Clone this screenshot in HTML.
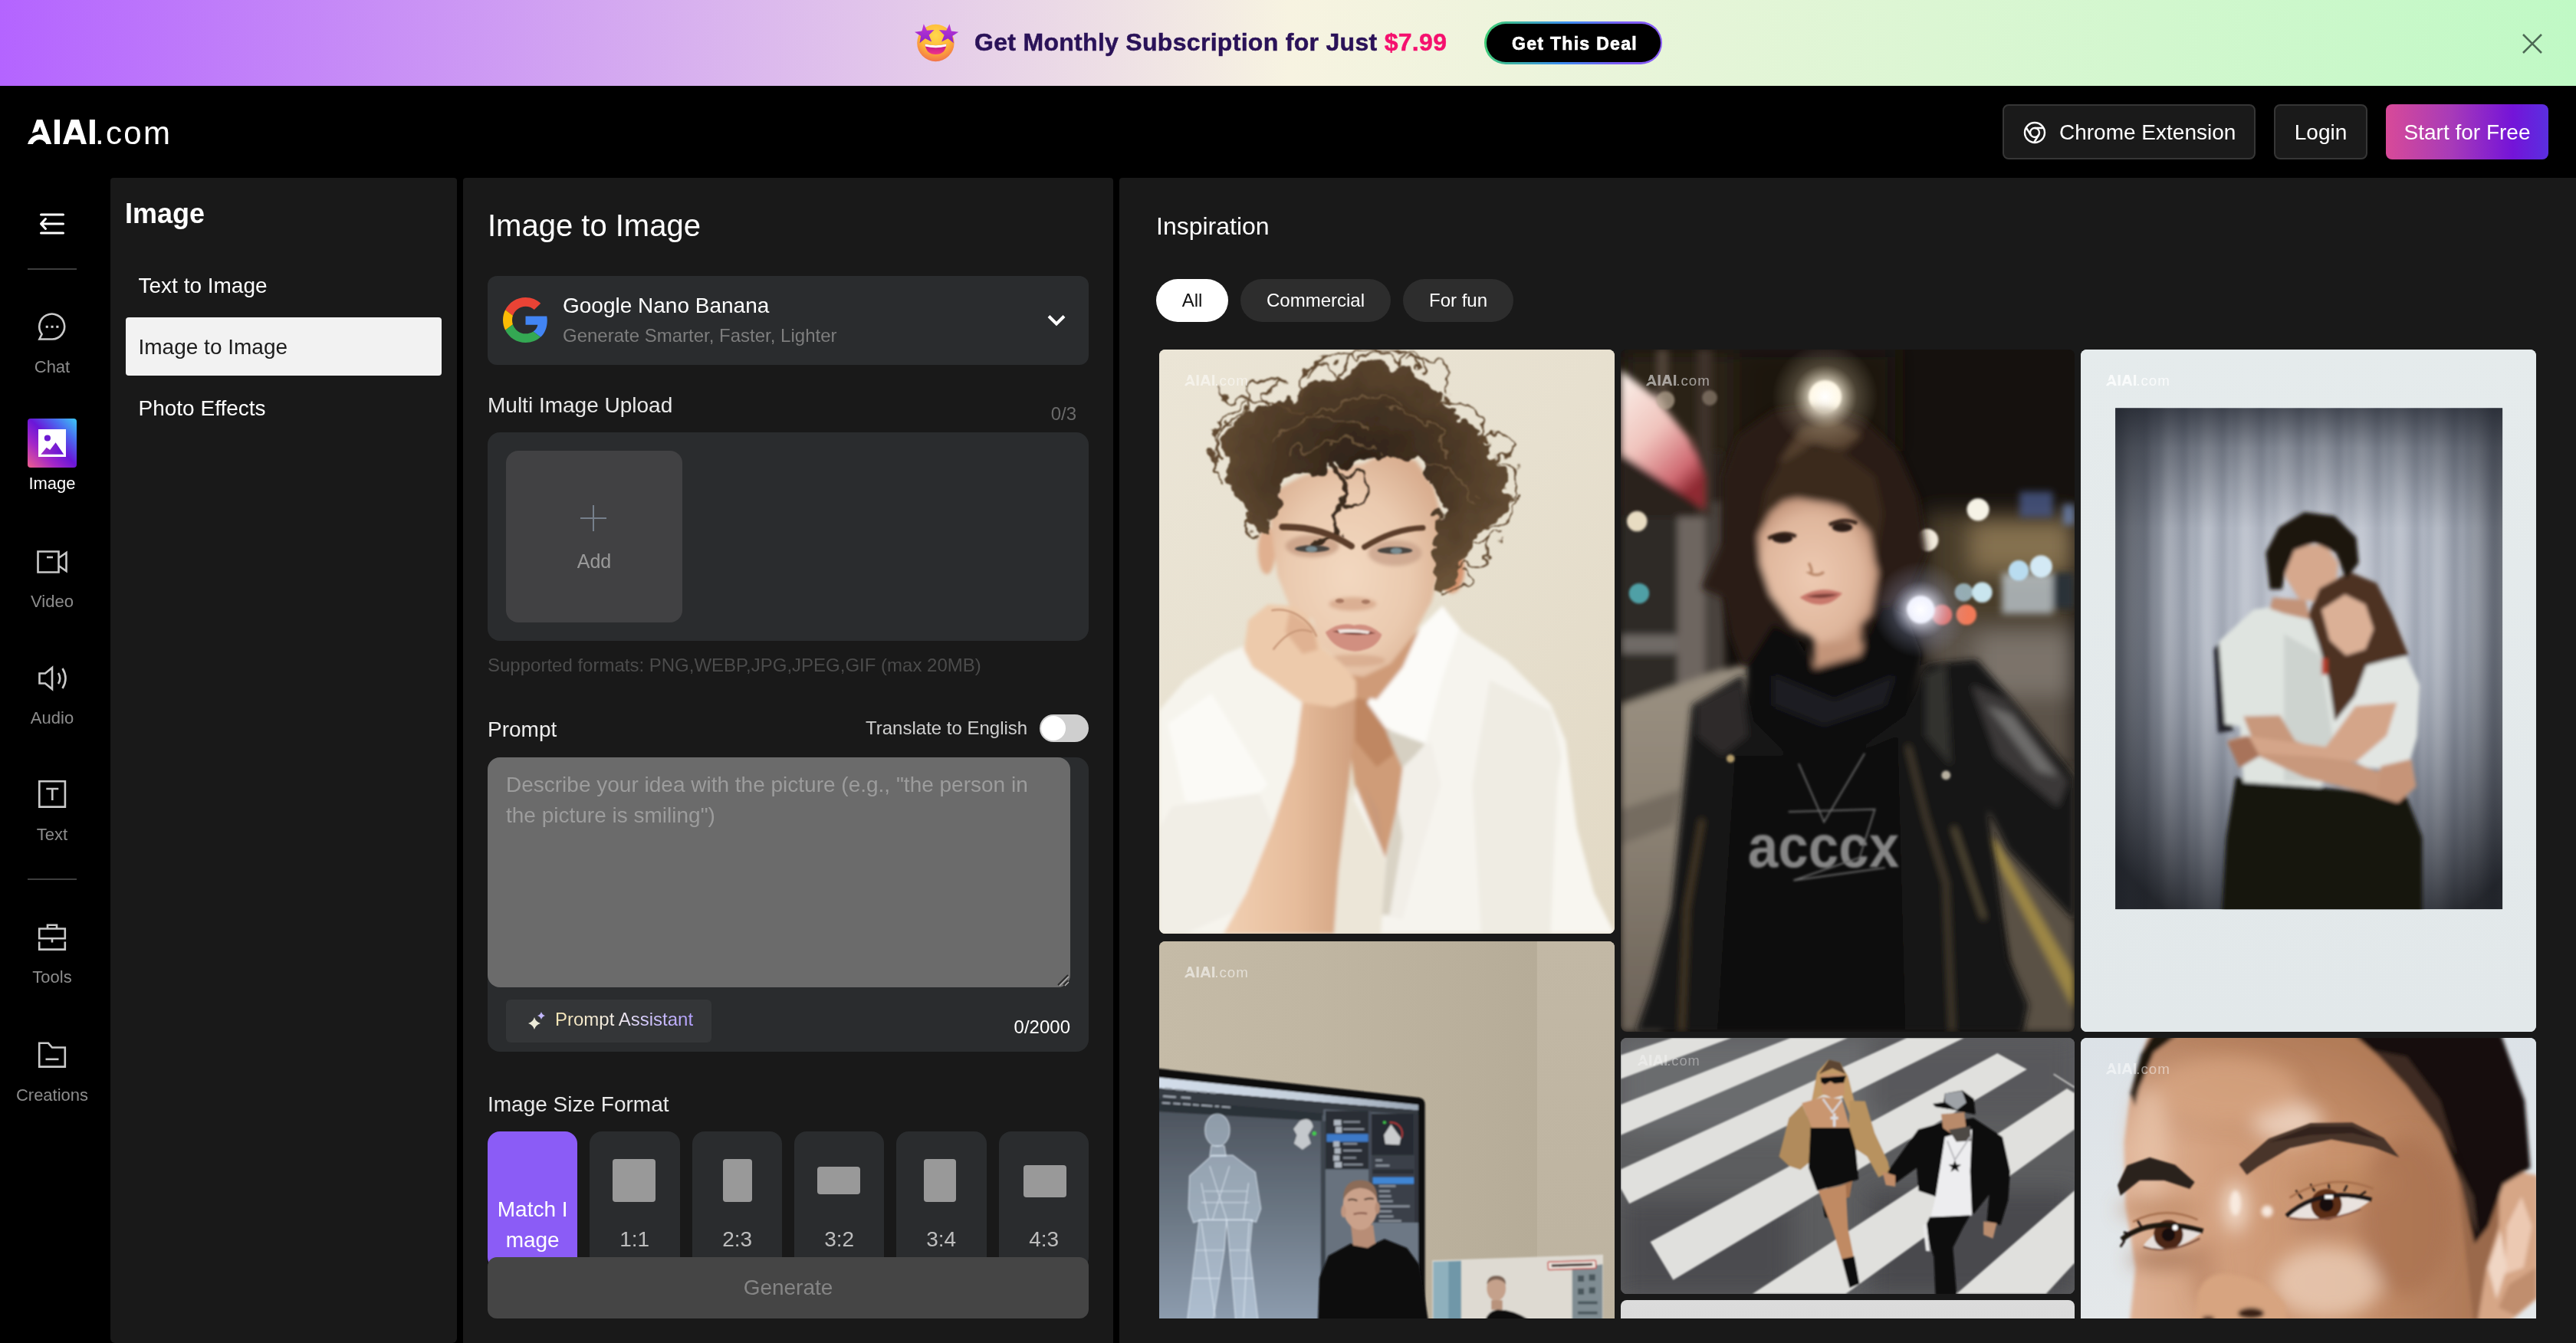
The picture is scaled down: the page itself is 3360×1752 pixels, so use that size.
<!DOCTYPE html>
<html lang="en">
<head>
<meta charset="utf-8">
<title>AIAI.com - Image to Image</title>
<style>
*{box-sizing:border-box;margin:0;padding:0}
html,body{width:3360px;height:1752px;overflow:hidden;background:#000}
body{position:relative;font-family:"Liberation Sans",sans-serif;color:#fff;-webkit-font-smoothing:antialiased}
.abs{position:absolute}
.t,.sl,.mi,.fl,.pill{will-change:transform}
.t{position:absolute;white-space:nowrap;line-height:1}
/* banner */
#banner{left:0;top:0;width:3360px;height:112px;background:linear-gradient(90deg,#b464ff 0%,#f7f3e1 50%,#c0f9c5 100%)}
#deal{left:1936px;top:28px;width:232px;height:56px;border-radius:28px;background:linear-gradient(100deg,#3ecf6e 0%,#3c8df0 45%,#7b5cf5 75%,#8a5cf6 100%);}
#deal i{position:absolute;left:3px;top:3px;right:2px;bottom:3px;border-radius:26px;background:#000}
/* header */
.hbtn{position:absolute;top:136px;height:72px;border:2px solid #363636;border-radius:8px;background:#1a1a1a}
/* sidebar */
.sl{position:absolute;left:0;width:136px;text-align:center;font-size:22px;line-height:24px;color:#8c8c8c}
.sdiv{position:absolute;left:36px;width:64px;height:2px;background:#3d3d3d}
svg{position:absolute;overflow:visible}
.ic{fill:none;stroke:#c9c9c9;stroke-width:2.6}
/* panels */
.panel{position:absolute;top:232px;background:#191919}
.mi{position:absolute;left:164px;width:412px;height:76px;line-height:78px;padding-left:16.5px;font-size:28px;color:#fff;border-radius:4px}
.box{position:absolute;background:#2a2c2e}
.fmt{position:absolute;top:1476px;width:117.33px;height:180px;border-radius:16px;background:#2a2c2e}
.fmt b{position:absolute;background:#999;border-radius:4px}
.fl{position:absolute;top:1601px;width:117.33px;text-align:center;font-size:28px;line-height:32px;color:#bdbdbd}
.pill{position:absolute;top:364px;height:56px;border-radius:28px;background:#2d2d2d;font-size:24px;line-height:56px;text-align:center;color:#fff}
.img{position:absolute;overflow:hidden;border-radius:8px}
.wm{position:absolute;left:33px;top:33px;width:82px;height:14.3px;fill:#fff;color:#fff;opacity:.55}
</style>
</head>
<body>
<svg width="0" height="0" style="left:0;top:0"><defs><clipPath id="lc2"><rect x="0" y="0" width="26" height="32"/></clipPath><symbol id="lg" viewBox="0 0 184 32"><circle cx="15.65" cy="35.6" r="12.75" stroke="currentColor" stroke-width="6.5" fill="none" clip-path="url(#lc2)"/><path d="M12 0H19.4L31.3 32H24.5L16.1 8.9L13.3 15.4L5.9 17.7Z"/><rect x="35" y="0" width="7" height="32"/><path fill-rule="evenodd" d="M56.7 0H67L77 32H70.2L68.3 26H54.8L52.9 32H46ZM61.5 9.8L66 20.2H56.9Z"/><rect x="80.9" y="0" width="7" height="32"/><text x="88" y="32" font-size="42" letter-spacing="2.3" font-family="Liberation Sans, sans-serif">.com</text></symbol></defs></svg>

<!-- ================= BANNER ================= -->
<div id="banner" class="abs"></div>
<svg id="emoji" style="left:1192px;top:28px" width="58" height="56" viewBox="0 0 58 56">
  <defs>
    <radialGradient id="eg" cx="0.5" cy="0.3" r="0.75"><stop offset="0" stop-color="#ffd74d"/><stop offset=".55" stop-color="#ffb636"/><stop offset="1" stop-color="#f0684e"/></radialGradient>
    <linearGradient id="es" x1="0" y1="0" x2="0" y2="1"><stop offset="0" stop-color="#c238d8"/><stop offset="1" stop-color="#8a22c8"/></linearGradient>
    <linearGradient id="em" x1="0" y1="0" x2="0" y2="1"><stop offset="0" stop-color="#b5148c"/><stop offset="1" stop-color="#f0358a"/></linearGradient>
  </defs>
  <circle cx="28.4" cy="28" r="24.2" fill="url(#eg)"/>
  <path d="M14.5 29.5Q28.5 33 42.5 29.5Q41 43 28.5 43Q16 43 14.5 29.5Z" fill="url(#em)"/>
  <path d="M14.5 29.5Q28.5 33 42.5 29.5L42 32.6Q28.5 36 15 32.6Z" fill="#fff"/>
  <path d="M12.8 3.2L17.0 11.8L26.5 11.1L19.7 17.8L23.2 26.6L14.8 22.2L7.5 28.3L9.1 18.9L1.0 13.8L10.5 12.4Z" fill="url(#es)"/>
  <path d="M46.5 3.2L48.8 12.4L58.3 13.8L50.2 18.9L51.9 28.3L44.5 22.2L36.1 26.6L39.6 17.8L32.8 11.1L42.3 11.8Z" fill="url(#es)"/>
</svg>
<div class="t" id="btxt" style="left:1271px;top:35px;font-size:32px;line-height:40px;font-weight:700;color:#2a1258;letter-spacing:.3px;-webkit-text-stroke:.5px #2a1258">Get Monthly Subscription for Just <span style="color:#f5106e;-webkit-text-stroke:.5px #f5106e">$7.99</span></div>
<div id="deal" class="abs"><i></i></div>
<div class="t" id="dealt" style="left:1937.5px;top:28.5px;width:232px;height:56px;line-height:56px;text-align:center;font-size:23px;font-weight:700;color:#fff;letter-spacing:1.3px;-webkit-text-stroke:.7px #fff">Get This Deal</div>
<svg style="left:3290px;top:44px" width="26" height="26" viewBox="0 0 26 26"><path d="M1 1L25 25M25 1L1 25" stroke="#4d6a55" stroke-width="2.6" fill="none"/></svg>

<!-- ================= HEADER ================= -->
<svg id="logo" style="left:36px;top:156px" width="92" height="32" viewBox="0 0 92 32"><defs><clipPath id="lc"><rect x="0" y="0" width="26" height="32"/></clipPath></defs><g fill="#fff"><circle cx="15.65" cy="35.6" r="12.75" stroke="#fff" stroke-width="6.5" fill="none" clip-path="url(#lc)"/><path d="M12 0H19.4L31.3 32H24.5L16.1 8.9L13.3 15.4L5.9 17.7Z"/><rect x="35" y="0" width="7" height="32"/><path fill-rule="evenodd" d="M56.7 0H67L77 32H70.2L68.3 26H54.8L52.9 32H46ZM61.5 9.8L66 20.2H56.9Z"/><rect x="80.9" y="0" width="7" height="32"/></g></svg>
<div class="t" id="logoc" style="left:124px;top:150px;font-size:42px;line-height:48px;letter-spacing:2.3px">.com</div>

<div class="hbtn" style="left:2612px;width:330px"></div>
<svg style="left:2639px;top:158px" width="30" height="30" viewBox="0 0 30 30"><g fill="none" stroke="#fff" stroke-width="2.4"><circle cx="15" cy="15" r="13"/><circle cx="15" cy="15" r="6"/><path d="M15 9H27M9.8 18L3.6 8.2M20.2 18L14 28"/></g></svg>
<div class="t" id="chx" style="left:2686px;top:157px;font-size:28px;line-height:32px">Chrome Extension</div>
<div class="hbtn" style="left:2966px;width:122px"></div>
<div class="t" id="login" style="left:2966px;top:157px;width:122px;text-align:center;font-size:28px;line-height:32px">Login</div>
<div class="abs" style="left:3112px;top:136px;width:212px;height:72px;border-radius:8px;background:linear-gradient(90deg,#d84a98 0%,#a83bb8 40%,#7414d8 78%,#5a2fe0 100%)"></div>
<div class="t" id="sff" style="left:3112px;top:157px;width:212px;text-align:center;font-size:28px;line-height:32px">Start for Free</div>

<!-- ================= SIDEBAR ================= -->
<svg style="left:52px;top:278px" width="33" height="28" viewBox="0 0 33 28"><g fill="none" stroke="#fff" stroke-width="3" stroke-linecap="round" stroke-linejoin="round"><path d="M1.5 2H30.5M1.5 26H30.5M2 14H30.5M7.5 7.5L1.5 14L7.5 20.5"/></g></svg>
<div class="sdiv" style="top:350px"></div>

<svg style="left:49px;top:408px" width="38" height="38" viewBox="0 0 38 38"><path class="ic" stroke-width="2.8" stroke-linejoin="miter" d="M2.4 34.5H19.1A16.45 16.45 0 1 0 5.6 28Z"/><g fill="#d0d0d0"><rect x="10.7" y="16.8" width="3.1" height="3"/><rect x="17.5" y="16.8" width="3.1" height="3"/><rect x="24.3" y="16.8" width="3.1" height="3"/></g></svg>
<div class="sl" id="sl0" style="top:467px">Chat</div>

<div class="abs" style="left:36px;top:546px;width:64px;height:64px;border-radius:4px;background:linear-gradient(45deg,#ef5f8c 0%,#a327c8 30%,#6a17d8 52%,#4a6cf0 76%,#3ccaf5 100%)"></div>
<svg style="left:50px;top:560px" width="36" height="36" viewBox="0 0 36 36"><defs><linearGradient id="mg" x1="0" y1="0" x2="1" y2="0"><stop offset="0" stop-color="#9c2cc6"/><stop offset="1" stop-color="#6414d8"/></linearGradient></defs><rect width="36" height="36" fill="#fff"/><circle cx="11.9" cy="11.5" r="4.1" fill="#6d1ad2"/><path d="M3.3 32.8L10.7 23.8L15.2 27.1L22.6 17.3L33.2 32.8Z" fill="url(#mg)"/></svg>
<div class="sl" id="sl1" style="top:619px;color:#fff">Image</div>

<svg style="left:48px;top:717.5px" width="40" height="30" viewBox="0 0 40 30"><path class="ic" d="M1.5 1.5H28.5V28.5H1.5ZM28.5 10L38.5 3V27L28.5 20"/><path d="M13 9H21" stroke="#c9c9c9" stroke-width="2.6"/></svg>
<div class="sl" id="sl2" style="top:773px">Video</div>

<svg style="left:49.5px;top:869px" width="38" height="32" viewBox="0 0 38 32"><path class="ic" d="M1.5 9.5H9L18 2V30L9 22.5H1.5Z"/><path class="ic" d="M26 9Q30.5 16 26 23M31.5 3Q39.5 16 31.5 29"/></svg>
<div class="sl" id="sl3" style="top:925px">Audio</div>

<svg style="left:49px;top:1017px" width="38" height="38" viewBox="0 0 38 38"><path class="ic" d="M2.3 2.3H35.9V35.6H2.3Z"/><path class="ic" d="M11.3 12H27.3M19.3 12V27"/></svg>
<div class="sl" id="sl4" style="top:1077px">Text</div>

<div class="sdiv" style="top:1146px"></div>

<svg style="left:49px;top:1204.6px" width="38" height="36" viewBox="0 0 38 36"><path class="ic" d="M2.2 6.5H35.8V19.2H2.2ZM13 6.5V1.8H25V6.5M2.2 23.5V33.6H35.8V23.5M19 19.2V24.5"/></svg>
<div class="sl" id="sl5" style="top:1263px">Tools</div>

<svg style="left:49px;top:1359px" width="38" height="35" viewBox="0 0 38 35"><path class="ic" d="M2.2 1.8H14L19 7.5H35.8V32.6H2.2Z"/><path class="ic" d="M10.5 22.8H27.5"/></svg>
<div class="sl" id="sl6" style="top:1416.5px">Creations</div>

<!-- ================= PANEL 1 : menu ================= -->
<div class="panel" style="left:144px;width:452px;height:1520px;border-radius:4px 4px 6px 6px"></div>
<div class="t" id="p1t" style="left:163px;top:260.5px;font-size:36px;line-height:36px;font-weight:700">Image</div>
<div class="mi" id="mi1" style="top:334px">Text to Image</div>
<div class="mi" id="mi2" style="top:414px;background:#f2f2f2;color:#1c1c1c">Image to Image</div>
<div class="mi" id="mi3" style="top:494px">Photo Effects</div>

<!-- ================= PANEL 2 : form ================= -->
<div class="panel" style="left:604px;width:848px;height:1520px;border-radius:4px 4px 0 0"></div>
<div class="t" id="p2t" style="left:636px;top:272px;font-size:40px;line-height:44px">Image to Image</div>

<div class="box" style="left:636px;top:360px;width:784px;height:116px;border-radius:12px"></div>
<svg style="left:656px;top:388px" width="59" height="59" viewBox="0 0 48 48"><path fill="#EA4335" d="M24 9.5c3.54 0 6.71 1.22 9.21 3.6l6.85-6.85C35.9 2.38 30.47 0 24 0 14.62 0 6.51 5.38 2.56 13.22l7.98 6.19C12.43 13.72 17.74 9.5 24 9.5z"/><path fill="#4285F4" d="M46.98 24.55c0-1.57-.15-3.09-.38-4.55H24v9.02h12.94c-.58 2.96-2.26 5.48-4.78 7.18l7.73 6c4.51-4.18 7.09-10.36 7.09-17.65z"/><path fill="#FBBC05" d="M10.53 28.59c-.48-1.45-.76-2.99-.76-4.59s.27-3.14.76-4.59l-7.98-6.19C.92 16.46 0 20.12 0 24c0 3.88.92 7.54 2.56 10.78l7.97-6.19z"/><path fill="#34A853" d="M24 48c6.48 0 11.93-2.13 15.89-5.81l-7.73-6c-2.15 1.45-4.92 2.3-8.16 2.3-6.26 0-11.57-4.22-13.47-9.91l-7.98 6.19C6.51 42.62 14.62 48 24 48z"/></svg>
<div class="t" id="gnb" style="left:734px;top:383px;font-size:28px;line-height:32px">Google Nano Banana</div>
<div class="t" id="gsub" style="left:734px;top:424px;font-size:24px;line-height:28px;color:#7d7d7d">Generate Smarter, Faster, Lighter</div>
<svg style="left:1366px;top:410px" width="24" height="16" viewBox="0 0 24 16"><path d="M2 2.5L12 12.5L22 2.5" fill="none" stroke="#fff" stroke-width="4"/></svg>

<div class="t" id="miu" style="left:636px;top:513px;font-size:28px;line-height:32px;color:#e8e8e8">Multi Image Upload</div>
<div class="t" id="c03" style="left:1344px;top:526px;width:60px;text-align:right;font-size:24px;line-height:28px;color:#6a6a6a">0/3</div>
<div class="box" style="left:636px;top:564px;width:784px;height:272px;border-radius:16px"></div>
<div class="abs" style="left:660px;top:588px;width:230px;height:224px;border-radius:16px;background:#414143"></div>
<svg style="left:757px;top:659px" width="34" height="34" viewBox="0 0 34 34"><path d="M17 0V34M0 17H34" stroke="#76808c" stroke-width="2" fill="none"/></svg>
<div class="t" id="add" style="left:660px;top:718px;width:230px;text-align:center;font-size:25px;line-height:28px;color:#9a9a9a">Add</div>
<div class="t" id="sup" style="left:636px;top:854px;font-size:24px;line-height:28px;color:#4b4b4b">Supported formats: PNG,WEBP,JPG,JPEG,GIF (max 20MB)</div>

<div class="t" id="prm" style="left:636px;top:936px;font-size:28px;line-height:32px;color:#ececec">Prompt</div>
<div class="t" id="tte" style="left:1129px;top:936px;font-size:24px;line-height:28px;color:#cfcfcf">Translate to English</div>
<div class="abs" style="left:1356px;top:932px;width:64px;height:36px;border-radius:18px;background:#cfcfcf"></div>
<div class="abs" style="left:1358px;top:934px;width:32px;height:32px;border-radius:16px;background:#fff"></div>

<div class="box" style="left:636px;top:988px;width:784px;height:384px;border-radius:16px"></div>
<div class="abs" style="left:636px;top:988px;width:760px;height:300px;border-radius:16px;background:#6b6b6b"></div>
<div class="t" id="ph" style="left:660px;top:1004px;font-size:28px;line-height:40px;color:#9c9c9c;white-space:normal;width:720px">Describe your idea with the picture (e.g., "the person in<br>the picture is smiling")</div>
<svg style="left:1378px;top:1270px" width="16" height="16" viewBox="0 0 16 16"><path d="M15 2L2 15M15 9L9 15" stroke="#2b2b2b" stroke-width="2" fill="none"/><path d="M16 4L4 16M16 11L11 16" stroke="#b5b5b5" stroke-width="1.2" fill="none"/></svg>
<div class="abs" style="left:660px;top:1304px;width:268px;height:56px;border-radius:6px;background:#343638"></div>
<svg style="left:689px;top:1320px" width="22" height="24" viewBox="0 0 22 24"><path d="M8 7Q9.8 13.2 16 15Q9.8 16.8 8 23Q6.2 16.8 0 15Q6.2 13.2 8 7Z" fill="#ecead8"/><path d="M17 0Q18.2 3.8 22 5Q18.2 6.2 17 10Q15.8 6.2 12 5Q15.8 3.8 17 0Z" fill="#c3b8ff"/></svg>
<div class="t" id="pa" style="left:724px;top:1316px;font-size:24px;line-height:28px;background:linear-gradient(90deg,#f7e6b4 0%,#f6f0e6 42%,#d6ccff 65%,#b3a0ff 100%);-webkit-background-clip:text;background-clip:text;color:transparent">Prompt Assistant</div>
<div class="t" id="cnt" style="left:1296px;top:1326px;width:100px;text-align:right;font-size:24px;line-height:28px;color:#fff">0/2000</div>

<div class="t" id="isf" style="left:636px;top:1425px;font-size:28px;line-height:32px;color:#e8e8e8">Image Size Format</div>
<div class="fmt" style="left:636px;background:#8b5cf6"></div>
<div class="fmt" style="left:769.33px"><b style="left:30px;top:36px;width:56px;height:56px"></b></div>
<div class="fmt" style="left:902.67px"><b style="left:40px;top:36px;width:38px;height:56px"></b></div>
<div class="fmt" style="left:1036px"><b style="left:30px;top:46px;width:56px;height:36px"></b></div>
<div class="fmt" style="left:1169.33px"><b style="left:36px;top:36px;width:42px;height:56px"></b></div>
<div class="fmt" style="left:1302.67px"><b style="left:32px;top:44px;width:56px;height:42px"></b></div>
<div class="fl" id="fl0" style="left:636px;top:1557.5px;color:#fff;line-height:40px">Match I<br>mage</div>
<div class="fl" id="fl1" style="left:769.33px">1:1</div>
<div class="fl" id="fl2" style="left:902.67px">2:3</div>
<div class="fl" id="fl3" style="left:1036px">3:2</div>
<div class="fl" id="fl4" style="left:1169.33px">3:4</div>
<div class="fl" id="fl5" style="left:1302.67px">4:3</div>
<div class="abs" style="left:636px;top:1640px;width:784px;height:80px;border-radius:12px;background:#454545"></div>
<div class="t" id="gen" style="left:636px;top:1664px;width:784px;text-align:center;font-size:28px;line-height:32px;color:#858585">Generate</div>

<!-- ================= PANEL 3 : inspiration ================= -->
<div class="panel" style="left:1460px;width:1900px;height:1520px;border-radius:4px 0 0 0"></div>
<div class="t" id="insp" style="left:1508px;top:277px;font-size:32px;line-height:36px">Inspiration</div>
<div class="pill" id="pl0" style="left:1508px;width:94px;background:#fff;color:#111">All</div>
<div class="pill" id="pl1" style="left:1618px;width:196px">Commercial</div>
<div class="pill" id="pl2" style="left:1830px;width:144px">For fun</div>

<div id="grid" class="abs" style="left:1500px;top:440px;width:1860px;height:1280px;overflow:hidden">
<!--IMG1S--><div class="img" style="left:12px;top:16px;width:594px;height:762px;background:#e8e1d0">
<svg width="594" height="762" viewBox="0 0 1047 1343" preserveAspectRatio="none" style="left:0;top:0">
<defs>
<filter id="b1" x="-10%" y="-10%" width="120%" height="120%"><feGaussianBlur stdDeviation="5"/></filter>
<filter id="b1s" x="-10%" y="-10%" width="120%" height="120%"><feGaussianBlur stdDeviation="2"/></filter>
<filter id="h1" x="-20%" y="-20%" width="140%" height="140%"><feTurbulence type="fractalNoise" baseFrequency="0.018" numOctaves="3" seed="7" result="n"/><feDisplacementMap in="SourceGraphic" in2="n" scale="70" xChannelSelector="R" yChannelSelector="G"/><feGaussianBlur stdDeviation="1.6"/></filter>
<filter id="b1l" x="-20%" y="-20%" width="140%" height="140%"><feGaussianBlur stdDeviation="18"/></filter>
<linearGradient id="g1bg" x1="0" y1="0" x2="1" y2="1"><stop offset="0" stop-color="#ebe5d6"/><stop offset=".5" stop-color="#e7e0cf"/><stop offset="1" stop-color="#e2d9c5"/></linearGradient>
<linearGradient id="g1arm" x1="0" y1="0" x2="1" y2="0"><stop offset="0" stop-color="#f1d0b3"/><stop offset=".55" stop-color="#e6bc9b"/><stop offset="1" stop-color="#cf9f7e"/></linearGradient>
<radialGradient id="g1face" cx="45%" cy="55%" r="60%"><stop offset="0" stop-color="#f3d8c0"/><stop offset=".6" stop-color="#eacaaf"/><stop offset="1" stop-color="#d9ae90"/></radialGradient>
<radialGradient id="g1hair" cx="50%" cy="45%" r="60%"><stop offset="0" stop-color="#2a1f16"/><stop offset=".5" stop-color="#493624"/><stop offset="1" stop-color="#6b5338"/></radialGradient>
</defs>
<rect width="1047" height="1343" fill="url(#g1bg)"/>
<g filter="url(#b1)">
<!-- shirt left -->
<path d="M0 830L60 760L150 700L200 680L330 800L320 950L260 1100L200 1250L150 1343H0Z" fill="#f6f4ed"/>
<path d="M20 860L120 790L250 1000L200 1050L60 1040Z" fill="#fbfaf6"/>
<path d="M30 1050L230 1020L260 1090L180 1290L60 1343H0V1100Z" fill="#f1eee6"/>
<!-- shirt right -->
<path d="M480 810L545 720L600 640L650 590L700 650L800 715L900 815L935 900L960 1100L1000 1250L1047 1343H400L420 1200L440 1080Z" fill="#f6f4ee"/>
<path d="M760 760L900 830L930 960L900 1343H740L720 1000Z" fill="#efece3"/>
<path d="M930 900L960 1100L1000 1250L1047 1343H900L915 1000Z" fill="#f8f6f0"/>
<!-- chest -->
<path d="M445 780L505 800L562 960L548 1050L520 1170L450 1000L436 900Z" fill="#cf9c78"/>
<path d="M450 800L500 810L540 930L500 960L450 900Z" fill="#bf8762"/>
<path d="M470 1000L520 1170L505 1060Z" fill="#c9997a"/>
<!-- inner shirt (left of chest below arm) -->
<path d="M430 1000L520 1175L510 1343H400L415 1150Z" fill="#ece6d8"/>
<!-- collar -->
<path d="M478 812L600 640L652 590L690 640L650 760L612 905L520 870Z" fill="#fcfbf8"/>
<path d="M520 872L612 907L560 965Z" fill="#d6d0c2"/>
<path d="M560 960L625 900L648 1000L600 1160L560 1310L512 1300L522 1170L548 1050Z" fill="#f2efe8"/>
<path d="M548 1050L522 1170L512 1300L530 1300L560 1120Z" fill="#d9d3c5"/>
<!-- neck -->
<path d="M440 740L545 700L600 640L560 730L500 805L445 790Z" fill="#cf9b78"/>
<!-- arm -->
<path d="M330 800L452 790L446 900L430 1050L412 1200L402 1343H148L200 1250L260 1100L310 950Z" fill="url(#g1arm)"/>
<!-- ears -->
<ellipse cx="672" cy="505" rx="30" ry="55" fill="#d6946f"/>
<ellipse cx="247" cy="462" rx="20" ry="55" fill="#e0b090"/>
<!-- face -->
<path d="M255 395L275 320L330 290L400 272L470 262L520 235L590 255L632 315L652 400L647 500L626 580L582 660L532 722L470 752L435 748L420 720L372 682L352 620L300 590L272 520Z" fill="url(#g1face)"/>
<!-- eye shadows -->
<ellipse cx="352" cy="452" rx="62" ry="26" fill="#c49a80" opacity=".75"/>
<ellipse cx="542" cy="468" rx="62" ry="30" fill="#c49c86" opacity=".7"/>
<ellipse cx="445" cy="585" rx="55" ry="16" fill="#d6a68a" opacity=".8"/>
<ellipse cx="450" cy="715" rx="70" ry="14" fill="#d4a588" opacity=".7"/>
<!-- fist -->
<path d="M195 690L205 622L250 586L310 590L342 612L362 652L372 684L420 722L452 762L452 802L400 822L330 812L262 762L215 730Z" fill="#edcaab"/>
<path d="M300 600L355 640L365 690L330 700L290 650Z" fill="#e0b292"/>
</g>
<g filter="url(#b1s)">
<!-- hair -->
</g>
<g filter="url(#h1)">
<path d="M165 310L135 215L190 160L262 130L330 85L420 55L500 35L580 52L640 105L692 160L760 208L792 265L800 340L772 405L722 436L702 496L652 556L632 552L646 480L650 400L630 312L590 252L520 232L470 262L400 272L330 292L282 312L257 382L242 436L218 424L198 378L176 340Z" fill="url(#g1hair)"/>
<g fill="none" stroke="#5f472e" stroke-width="5">
<path d="M150 300C90 250 140 150 200 150C150 190 130 240 175 260"/>
<path d="M200 150C180 90 240 40 290 80C250 70 230 110 262 130"/>
<path d="M130 90C160 130 200 130 240 120"/>
<path d="M340 60C380 20 440 0 470 30C500 -10 580 -10 600 50"/>
<path d="M420 60C440 -10 520 -20 540 40C560 -10 620 0 610 60"/>
<path d="M560 30C620 0 700 40 660 110"/>
<path d="M640 120C700 100 760 150 740 210"/>
<path d="M740 210C800 170 830 220 780 250C830 250 840 330 790 350"/>
<path d="M800 350C830 350 830 330 820 340C800 420 760 430 740 400"/>
<path d="M720 440C760 460 790 420 770 440C740 500 700 520 690 500"/>
<path d="M650 560C700 560 720 520 700 520"/>
<path d="M215 430C180 420 190 370 215 380"/>
<path d="M120 200C150 120 260 100 330 140M140 260C100 230 120 170 170 170M330 100C300 50 380 10 420 60"/>
</g>
<g fill="none" stroke="#7a6244" stroke-width="4" opacity=".8">
<path d="M260 200C330 150 420 140 470 180M300 260C360 200 450 200 500 230M520 150C580 140 640 180 660 240M600 260C660 250 720 300 720 360M350 150C420 100 520 100 560 140"/>
</g>
<path d="M395 270C430 300 420 360 408 400C400 425 370 440 345 425" fill="none" stroke="#3a2a1c" stroke-width="12"/>
<path d="M420 290C470 280 500 320 470 345C450 360 420 350 410 335" fill="none" stroke="#3a2a1c" stroke-width="7"/>
</g>
<g filter="url(#b1s)">
<!-- brows -->
<path d="M283 408Q370 405 442 452" fill="none" stroke="#5b3d29" stroke-width="15" stroke-linecap="round"/>
<path d="M472 454Q540 412 606 410" fill="none" stroke="#5b3d29" stroke-width="13" stroke-linecap="round"/>
<!-- eyes -->
<ellipse cx="352" cy="458" rx="40" ry="8" fill="#4a4440"/>
<ellipse cx="350" cy="459" rx="13" ry="6.5" fill="#788c92"/>
<ellipse cx="542" cy="462" rx="40" ry="8" fill="#4a4440"/>
<ellipse cx="545" cy="463" rx="13" ry="6.5" fill="#788c92"/>
<!-- lips -->
<path d="M382 650Q415 625 448 634Q480 626 512 655Q500 690 450 694Q400 690 382 650Z" fill="#d18f80"/>
<path d="M398 648Q450 636 498 652Q450 662 398 648Z" fill="#7c4238"/>
<path d="M410 644Q450 640 485 648L480 654Q450 648 415 652Z" fill="#f1e6e0"/>
<!-- nostrils -->
<ellipse cx="415" cy="578" rx="10" ry="5" fill="#a87860"/><ellipse cx="475" cy="580" rx="10" ry="5" fill="#a87860"/>
<!-- fist lines -->
<path d="M258 600C300 590 345 620 362 660M262 690C300 640 330 640 352 650" fill="none" stroke="#c79677" stroke-width="4"/>
</g>
</svg>
<svg class="wm" style="opacity:0.5" viewBox="0 0 184 32"><use href="#lg"/></svg>
</div>
<!--IMG1E-->
<!--IMG2S--><div class="img" style="left:614px;top:16px;width:592px;height:890px;background:#17130f">
<svg width="592" height="890" viewBox="0 0 893 1343" preserveAspectRatio="none" style="left:0;top:0">
<defs>
<filter id="b2" x="-10%" y="-10%" width="120%" height="120%"><feGaussianBlur stdDeviation="7"/></filter>
<filter id="b2s" x="-10%" y="-10%" width="120%" height="120%"><feGaussianBlur stdDeviation="2.5"/></filter>
<filter id="b2l" x="-50%" y="-50%" width="200%" height="200%"><feGaussianBlur stdDeviation="22"/></filter>
<linearGradient id="g2aw" x1="0" y1="0" x2=".6" y2="1"><stop offset="0" stop-color="#fbf3ec"/><stop offset=".5" stop-color="#f0c4bd"/><stop offset=".85" stop-color="#cf6a72"/><stop offset="1" stop-color="#8f2a33"/></linearGradient>
<linearGradient id="g2sw" x1="0" y1="0" x2="0" y2="1"><stop offset="0" stop-color="#9b9182"/><stop offset=".45" stop-color="#8b8173"/><stop offset="1" stop-color="#6a6157"/></linearGradient>
<radialGradient id="g2face" cx="45%" cy="55%" r="60%"><stop offset="0" stop-color="#edcab2"/><stop offset=".7" stop-color="#dfb69c"/><stop offset="1" stop-color="#b98a70"/></radialGradient>
<radialGradient id="g2gl"><stop offset="0" stop-color="#fff" stop-opacity="1"/><stop offset=".3" stop-color="#fff6e0" stop-opacity=".75"/><stop offset=".6" stop-color="#d8c8a8" stop-opacity=".25"/><stop offset="1" stop-color="#d8c8a8" stop-opacity="0"/></radialGradient>
<radialGradient id="g2gb"><stop offset="0" stop-color="#fff" stop-opacity="1"/><stop offset=".25" stop-color="#eef0ff" stop-opacity=".8"/><stop offset=".6" stop-color="#a8b0d8" stop-opacity=".25"/><stop offset="1" stop-color="#a8b0d8" stop-opacity="0"/></radialGradient>
</defs>
<rect width="893" height="1343" fill="#15110e"/>
<g filter="url(#b2l)">
<rect x="600" y="320" width="293" height="220" fill="#4a3c2c"/>
<rect x="690" y="340" width="203" height="95" fill="#85714f"/>
<rect x="0" y="0" width="230" height="330" fill="#2c2018"/>
<rect x="240" y="0" width="300" height="200" fill="#1c1511"/>


<rect x="600" y="540" width="293" height="300" fill="#5b534a"/>
<rect x="700" y="560" width="193" height="120" fill="#7b736a"/>
</g>
<g filter="url(#b2)">
<!-- left wall and windows -->
<rect x="0" y="200" width="200" height="500" fill="#2b221c"/>
<rect x="0" y="330" width="112" height="360" fill="#2e2a26"/>
<rect x="0" y="562" width="112" height="36" fill="#6f6b66"/>
<rect x="112" y="330" width="55" height="330" fill="#6e6660"/>
<rect x="165" y="300" width="40" height="360" fill="#4a423c"/>
<rect x="70" y="0" width="24" height="110" fill="#4f4339"/>
<rect x="150" y="0" width="30" height="330" fill="#3d332c"/>
<!-- sidewalk -->
<path d="M0 700L170 640L260 615L230 760L140 900L80 1343H0Z" fill="url(#g2sw)"/>
<path d="M0 905L120 865L105 935L0 975Z" fill="#756c61"/>
<!-- awning -->
<path d="M0 40L70 95L135 175L165 250L165 315L100 270L0 205Z" fill="url(#g2aw)"/>
<!-- road right -->
<path d="M700 880L893 820V1343H790Z" fill="#5a5145"/>
<path d="M712 955L742 972L893 1232V1300Z" fill="#9d8744"/>
<!-- right buildings lights -->
<rect x="785" y="280" width="65" height="50" fill="#47598a" opacity=".8"/>
<rect x="870" y="305" width="23" height="40" fill="#6f88b8" opacity=".8"/>
<rect x="750" y="440" width="100" height="80" fill="#c4d0da" opacity=".75"/>
<rect x="850" y="440" width="43" height="70" fill="#2a3038"/>
</g>
<!-- bokeh -->
<g filter="url(#b2s)">
<circle cx="402" cy="93" r="32" fill="#fffdf6"/>
<circle cx="32" cy="338" r="20" fill="#e8dcc2"/>
<circle cx="36" cy="480" r="20" fill="#4fa0a6"/>
<circle cx="88" cy="100" r="18" fill="#b5a592" opacity=".7"/>
<circle cx="175" cy="95" r="15" fill="#9a8a7a" opacity=".6"/>
<circle cx="703" cy="315" r="22" fill="#f6f3e6"/>
<circle cx="603" cy="375" r="22" fill="#f1eadb"/>
<circle cx="783" cy="435" r="20" fill="#b9dcf0"/>
<circle cx="827" cy="427" r="22" fill="#d3e9f5"/>
<circle cx="675" cy="478" r="18" fill="#a9c9d6" opacity=".8"/>
<circle cx="711" cy="478" r="20" fill="#c9e5ee"/>
<circle cx="632" cy="522" r="20" fill="#f06a5a"/>
<circle cx="680" cy="522" r="20" fill="#f27a58"/>
<circle cx="590" cy="512" r="27" fill="#ffffff"/>
</g>
<g filter="url(#b2)">
<!-- hair back -->
<path d="M200 250L230 170L300 120L400 108L480 140L545 200L585 290L602 400L572 470L530 505L500 560L300 560L280 580L240 625L215 560L200 480L158 470L200 380Z" fill="#2a1c15"/>

<!-- neck -->
<path d="M380 560L470 540L480 610L380 630Z" fill="#c39479"/>
<!-- face -->
<path d="M270 362L300 302L360 290L440 310L490 360L506 440L492 520L442 572L390 578L340 542L295 482L275 422Z" fill="url(#g2face)"/>
<!-- bangs -->
<path d="M268 370L285 280L330 200L420 190L500 250L520 340L500 420L488 350L440 305L390 300L330 290L295 320Z" fill="#3a291e"/>
<path d="M310 225L355 155L420 140L475 168L440 198L380 185L335 212Z" fill="#54402e"/>
<path d="M160 470L230 330L270 360L262 470L300 530L250 620L215 560L205 490Z" fill="#2a1c15"/>
<path d="M500 420L520 300L580 320L600 400L570 470L530 500Z" fill="#2a1c15"/>
<!-- scarf -->
<path d="M248 622L300 540L342 562L382 627L470 602L512 500L562 522L592 600L562 722L452 802L330 802L258 732Z" fill="#0d0d10"/>
<path d="M300 640L420 690L540 640L520 700L400 740L300 700Z" fill="#1d1d22"/>
<!-- jacket -->
<path d="M140 700L240 640L260 730L330 800L450 800L560 720L600 620L700 610L762 680L893 840V1125L762 985L722 905L762 1200L802 1290L790 1343H30L62 1250L100 1100L120 900Z" fill="#171615"/>
<path d="M150 700L238 655L250 760L200 800L150 760Z" fill="#2e2c2a"/>
<path d="M690 660L760 690L880 850L860 900L740 800Z" fill="#3a3937"/>
<path d="M720 700L770 720L860 840L820 830Z" fill="#6d6c6a"/>
<path d="M600 640L640 620L650 820L600 760Z" fill="#33302d"/>
<!-- tshirt -->
<path d="M225 800L330 800L450 800L545 760L560 1343H190Z" fill="#0a0a0b"/>
<!-- zips -->
<path d="M160 925L130 1100L120 1343" fill="none" stroke="#6e5a38" stroke-width="4"/>
<path d="M565 780L600 920L640 1050L652 1343" fill="none" stroke="#6a5d45" stroke-width="4"/>
<path d="M655 940L715 1120" fill="none" stroke="#75684c" stroke-width="5"/>
</g>
<circle cx="402" cy="93" r="105" fill="url(#g2gl)"/>
<circle cx="590" cy="512" r="95" fill="url(#g2gb)"/>
<g filter="url(#b2s)">
<path d="M290 372Q320 355 345 368" fill="none" stroke="#3a261c" stroke-width="7"/>
<path d="M410 345Q440 330 465 342" fill="none" stroke="#3a261c" stroke-width="7"/>
<ellipse cx="318" cy="372" rx="20" ry="9" fill="#2a1a14"/>
<ellipse cx="436" cy="350" rx="20" ry="9" fill="#2a1a14"/>
<path d="M352 488Q392 462 436 480Q400 520 352 488Z" fill="#c9786c"/>
<path d="M365 486Q395 478 428 482Q398 494 365 486Z" fill="#7d3f38"/>
<path d="M370 420Q380 440 372 440Q385 448 400 438" fill="none" stroke="#b88668" stroke-width="5"/>
<text x="250" y="1018" font-family="Liberation Sans, sans-serif" font-weight="700" font-size="118" fill="#858585" textLength="298" lengthAdjust="spacingAndGlyphs">acccx</text>
<path d="M350 815L400 930L480 795M330 910L500 905L470 1000L340 1045L520 1020" fill="none" stroke="#6a6a6a" stroke-width="3"/>
<circle cx="216" cy="805" r="8" fill="#b59d6a"/><circle cx="640" cy="838" r="9" fill="#b8b0a0"/>
</g>
</svg>
<svg class="wm" style="opacity:0.55" viewBox="0 0 184 32"><use href="#lg"/></svg>
</div>
<!--IMG2E-->
<!--IMG3S--><div class="img" style="left:1214px;top:16px;width:594px;height:890px;background:#e4eaeb">
<svg width="594" height="890" viewBox="0 0 896 1343" preserveAspectRatio="none" style="left:0;top:0">
<defs>
<filter id="b3" x="-10%" y="-10%" width="120%" height="120%"><feGaussianBlur stdDeviation="4"/></filter>
<filter id="b3f" x="-5%" y="-5%" width="110%" height="110%"><feGaussianBlur stdDeviation="6 0"/></filter>
<linearGradient id="g3p" x1="0" y1="0" x2="0" y2="1"><stop offset="0" stop-color="#e5ebec"/><stop offset="1" stop-color="#e2e8ea"/></linearGradient>
<linearGradient id="g3fold" x1="0" y1="0" x2="76" y2="0" gradientUnits="userSpaceOnUse" spreadMethod="repeat"><stop offset="0" stop-color="#9ba3b0"/><stop offset=".25" stop-color="#c0c6cf"/><stop offset=".5" stop-color="#a6adb9"/><stop offset=".7" stop-color="#878f9d"/><stop offset=".85" stop-color="#b1b8c3"/><stop offset="1" stop-color="#9ba3b0"/></linearGradient>
<radialGradient id="g3v" cx="52%" cy="36%" r="75%" fx="52%" fy="36%"><stop offset="0" stop-color="#dde0e8" stop-opacity=".7"/><stop offset=".4" stop-color="#c0c4d0" stop-opacity=".25"/><stop offset=".64" stop-color="#3b3e49" stop-opacity=".35"/><stop offset="1" stop-color="#16181d" stop-opacity=".9"/></radialGradient>
<clipPath id="c3"><rect x="68" y="115" width="762" height="987"/></clipPath>
<linearGradient id="g3t" x1="0" y1="0" x2="0" y2="1"><stop offset="0" stop-color="#20242e" stop-opacity=".7"/><stop offset=".08" stop-color="#2a2f3a" stop-opacity=".35"/><stop offset=".24" stop-color="#2a2f3a" stop-opacity="0"/></linearGradient>
<linearGradient id="g3h" x1="0" y1="0" x2="1" y2="0"><stop offset="0" stop-color="#1c2028" stop-opacity=".45"/><stop offset=".14" stop-color="#1c2028" stop-opacity="0"/><stop offset=".9" stop-color="#1c2028" stop-opacity="0"/><stop offset="1" stop-color="#1c2028" stop-opacity=".3"/></linearGradient>
</defs>
<rect width="896" height="1343" fill="url(#g3p)"/>
<g clip-path="url(#c3)">
<rect x="68" y="115" width="762" height="987" fill="url(#g3fold)" filter="url(#b3f)"/>
<rect x="68" y="115" width="762" height="987" fill="url(#g3v)"/>
<rect x="68" y="115" width="762" height="987" fill="url(#g3t)"/>
<rect x="68" y="115" width="762" height="987" fill="url(#g3h)"/>
<g filter="url(#b3)">
<path d="M262 590L290 560L300 750L270 755Z" fill="#23242b"/>
<!-- pants -->
<path d="M305 842L470 862L640 878L672 960V1110H278L286 960Z" fill="#14120f"/>
<!-- boy shirt -->
<path d="M272 575L340 512L400 503L452 535L482 600L502 700L506 792L472 862L320 852L314 742L284 737Z" fill="#dfe4e0"/>
<path d="M400 560L470 600L495 760L470 850L400 850Z" fill="#cdd3cf"/>
<!-- girl shirt -->
<path d="M538 642L580 610L640 604L667 660L662 762L640 832L560 822L510 792L500 732Z" fill="#e2e6e3"/>
<!-- boy neck/face -->
<path d="M378 488L442 493L452 532L400 520L372 510Z" fill="#c39378"/>
<path d="M398 400L430 385L482 385L506 420L502 470L472 497L430 492L404 450Z" fill="#d6a88d"/>
<!-- girl hair -->
<path d="M448 522L470 470L530 438L582 460L612 520L645 602L600 612L562 622L540 682L500 732L488 650L468 580Z" fill="#4e3224"/>
<!-- girl face -->
<path d="M474 512L520 482L560 502L576 550L560 590L522 602L490 572Z" fill="#dbb096"/>
<!-- boy hair -->
<path d="M372 472L364 400L390 350L440 320L500 328L542 370L547 420L522 452L502 400L460 380L420 395L402 440L396 472Z" fill="#1b1411"/>
<!-- arms -->
<path d="M320 722L392 720L422 770L582 830L650 808L658 860L622 892L560 872L440 842L350 800Z" fill="#c8987c"/>
<path d="M540 702L622 695L602 760L542 812L470 802L300 792L290 770L322 760L482 782Z" fill="#d4a589"/>
<path d="M288 772L330 760L352 800L312 824Z" fill="#a8735a"/>
<path d="M590 820L650 806L660 860L625 892L585 870Z" fill="#c69478"/>
<rect x="474" y="608" width="12" height="32" fill="#b8402e"/>
</g>
</g>
</svg>
<svg class="wm" style="opacity:0.8" viewBox="0 0 184 32"><use href="#lg"/></svg>
</div>
<!--IMG3E-->
<!--IMG4S--><div class="img" style="left:12px;top:788px;width:594px;height:600px;background:#c3b9a6">
<svg width="594" height="492" viewBox="0 0 1621 1343" preserveAspectRatio="none" style="left:0;top:0">
<defs>
<filter id="b4" x="-5%" y="-5%" width="110%" height="110%"><feGaussianBlur stdDeviation="3"/></filter>
<filter id="b4m" x="-10%" y="-10%" width="120%" height="120%"><feGaussianBlur stdDeviation="6"/></filter>
<linearGradient id="g4w" x1="0" y1="0" x2="1345" y2="0" gradientUnits="userSpaceOnUse"><stop offset="0" stop-color="#c5bba7"/><stop offset=".4" stop-color="#c0b6a2"/><stop offset="1" stop-color="#b6ac98"/></linearGradient>
<linearGradient id="g4w2" x1="0" y1="0" x2="0" y2="1"><stop offset="0" stop-color="#c2b8a5"/><stop offset="1" stop-color="#bdb3a0"/></linearGradient>
<linearGradient id="g4s" x1="0" y1="0" x2="0" y2="1"><stop offset="0" stop-color="#4d545e"/><stop offset=".5" stop-color="#6b7784"/><stop offset="1" stop-color="#8d9cae"/></linearGradient>
<linearGradient id="g4t" x1="0" y1="0" x2="1" y2="0"><stop offset="0" stop-color="#d3deea"/><stop offset=".6" stop-color="#c3cedb"/><stop offset="1" stop-color="#9aa6b4"/></linearGradient>
</defs>
<rect width="1621" height="1343" fill="url(#g4w)"/>
<rect x="1345" width="276" height="1343" fill="url(#g4w2)"/>
<g filter="url(#b4)">
<!-- bezel -->
<path d="M-10 452L925 556Q946 560 946 582V1350H-10Z" fill="#0e0e0f"/>
<!-- screen -->
<path d="M-10 600L922 625V1350H-10Z" fill="url(#g4s)"/>
<path d="M-10 484L922 582V602L-10 522Z" fill="url(#g4t)"/>
<path d="M-10 522L922 602V628L-10 604Z" fill="#363b43"/>
<path d="M-10 560L580 612V640L-10 606Z" fill="#2c3138"/>
<!-- right panel zone -->
<path d="M585 598L922 618V1350H585Z" fill="#5b646f"/>
<path d="M575 640H592V1350H575Z" fill="#3e454e"/>
<rect x="592" y="604" width="155" height="208" fill="#2b2f35"/>
<rect x="755" y="614" width="152" height="148" fill="#282b31"/>
<rect x="755" y="762" width="152" height="240" fill="#3a4048"/>
<rect x="745" y="604" width="10" height="740" fill="#454c56"/>
<rect x="907" y="614" width="15" height="400" fill="#30353c"/>
<rect x="596" y="686" width="148" height="28" fill="#3d7ac8"/>
<rect x="760" y="840" width="146" height="24" fill="#3f86d4"/>
<rect x="760" y="812" width="146" height="16" fill="#2a2e34"/>
<rect x="592" y="812" width="153" height="540" fill="#67727e"/>
<rect x="755" y="1002" width="167" height="350" fill="#6d7885"/>
<!-- list rows -->
<g fill="#aeb6c0"><rect x="622" y="636" width="26" height="20"/><rect x="628" y="660" width="22" height="22"/><rect x="620" y="712" width="22" height="20"/><rect x="624" y="736" width="22" height="20"/><rect x="620" y="762" width="22" height="20"/><rect x="624" y="786" width="26" height="20"/></g>
<g fill="#8a929c"><rect x="655" y="640" width="60" height="6"/><rect x="655" y="666" width="75" height="6"/><rect x="655" y="718" width="50" height="6"/><rect x="655" y="742" width="66" height="6"/><rect x="655" y="768" width="46" height="6"/><rect x="655" y="792" width="70" height="6"/>
<rect x="782" y="868" width="60" height="7"/><rect x="782" y="886" width="40" height="7"/><rect x="782" y="904" width="44" height="7"/><rect x="782" y="922" width="50" height="7"/><rect x="782" y="940" width="110" height="7"/><rect x="782" y="958" width="46" height="7"/><rect x="782" y="976" width="52" height="7"/><rect x="782" y="992" width="80" height="7"/><rect x="770" y="795" width="50" height="7"/><rect x="770" y="776" width="24" height="7"/></g>
<!-- toolbar text -->
<g fill="#9ea6b0"><rect x="20" y="520" width="26" height="6" transform="rotate(5 20 520)"/><rect x="58" y="524" width="30" height="6" transform="rotate(5 58 524)"/><rect x="96" y="528" width="40" height="6" transform="rotate(5 96 528)"/><rect x="144" y="532" width="26" height="6" transform="rotate(5 144 532)"/><rect x="180" y="535" width="22" height="6" transform="rotate(5 180 535)"/>
<rect x="14" y="548" width="46" height="7" transform="rotate(4 14 548)"/><rect x="78" y="552" width="34" height="7" transform="rotate(4 78 552)"/>
<rect x="10" y="572" width="30" height="6" transform="rotate(4 10 572)"/><rect x="50" y="574" width="26" height="6" transform="rotate(4 50 574)"/><rect x="84" y="576" width="28" height="6" transform="rotate(4 84 576)"/><rect x="120" y="579" width="22" height="6" transform="rotate(4 120 579)"/><rect x="150" y="581" width="40" height="6" transform="rotate(4 150 581)"/><rect x="198" y="584" width="16" height="6" transform="rotate(4 198 584)"/><rect x="222" y="586" width="32" height="6" transform="rotate(4 222 586)"/></g>
<!-- small 3d objects -->
<path d="M500 640Q540 620 548 660L530 690L540 720L510 742L480 720L490 690L478 668Z" fill="#c4c8cc"/>
<circle cx="552" cy="684" r="7" fill="#3fd24c"/>
<path d="M800 690L825 652L860 700L855 725L805 722Z" fill="#c9cbcd"/>
<path d="M820 645A40 40 0 0 1 862 700" fill="none" stroke="#c83a3a" stroke-width="4"/>
<circle cx="802" cy="645" r="5" fill="#3fd24c"/>
</g>
<!-- wireframe -->
<g filter="url(#b4)" fill="#cfe1f2" fill-opacity=".5" stroke="#e3eef8" stroke-opacity=".8" stroke-width="3">
<ellipse cx="207" cy="672" rx="44" ry="58"/>
<path d="M185 728H232L238 765H180Z"/>
<path d="M108 835L188 762H262L342 822L362 952L345 1000L318 992H150L122 1002L104 952Z"/>
<path d="M150 860L175 990M318 860L300 990M150 930H320M160 890H312M180 800L240 990M250 800L190 990"/>
<path d="M142 992H240L232 1100L192 1350H100L130 1100Z"/>
<path d="M240 992H332L322 1100L352 1350H272L250 1100Z"/>
<path d="M130 1100L232 1100M120 1200L215 1200M250 1100L322 1100M262 1200L335 1200M150 1000L200 1340M320 1000L300 1340"/>
</g>
<g filter="url(#b4)">
<!-- man -->
<path d="M565 1350L570 1200L602 1120L682 1076L742 1088L802 1060L882 1092L926 1152L958 1350Z" fill="#0d0d0f"/>
<path d="M682 1010H762L770 1075L742 1092L690 1082Z" fill="#b88d76"/>
<ellipse cx="716" cy="942" rx="62" ry="86" fill="#caa18a"/>
<path d="M655 920Q655 850 716 850Q778 850 776 920Q760 880 716 878Q675 880 655 920Z" fill="#8c6c58"/>
<ellipse cx="656" cy="962" rx="9" ry="22" fill="#c09680"/><ellipse cx="777" cy="950" rx="9" ry="22" fill="#b58c76"/>
<path d="M672 922Q690 915 705 924M730 920Q748 912 764 918" fill="none" stroke="#5a4236" stroke-width="6"/>
<path d="M692 972Q715 965 740 970" fill="none" stroke="#8d5f50" stroke-width="7"/>
<!-- card -->
<path d="M972 1136L1580 1116V1350H972Z" fill="#dedad2"/>
<path d="M975 1140L1075 1137V1350H975Z" fill="#8eb0bd"/>
<path d="M1030 1140L1075 1138V1350H1030Z" fill="#6f97a8"/>
<path d="M1470 1165L1578 1150V1350H1470Z" fill="#7f8c92"/>
<g fill="#4a565c"><rect x="1490" y="1190" width="22" height="22"/><rect x="1530" y="1186" width="22" height="22"/><rect x="1490" y="1236" width="22" height="22"/><rect x="1530" y="1232" width="22" height="22"/><rect x="1490" y="1282" width="70" height="10"/><rect x="1490" y="1318" width="70" height="10"/></g>
<rect x="1384" y="1142" width="170" height="28" rx="3" fill="#efe7df" stroke="#c23a3a" stroke-width="4" transform="rotate(-2 1384 1142)"/>
<rect x="1396" y="1151" width="146" height="9" fill="#3a2a2a" transform="rotate(-2 1384 1142)"/>
<ellipse cx="1200" cy="1236" rx="34" ry="44" fill="#c5a18b"/>
<path d="M1166 1222Q1168 1190 1200 1190Q1234 1190 1234 1222Q1220 1204 1200 1204Q1180 1204 1166 1222Z" fill="#7d6454"/>
<path d="M1182 1278H1222V1312H1182Z" fill="#b8937c"/>
<path d="M1160 1350Q1170 1318 1200 1312Q1260 1310 1320 1350Z" fill="#111"/>
</g>
</svg>
<svg class="wm" style="opacity:0.55" viewBox="0 0 184 32"><use href="#lg"/></svg>
</div>
<!--IMG4E-->
<!--IMG5S--><div class="img" style="left:614px;top:914px;width:592px;height:334px;background:#5e5f61">
<svg width="592" height="334" viewBox="0 0 2380 1343" preserveAspectRatio="none" style="left:0;top:0">
<defs>
<filter id="b5" x="-5%" y="-5%" width="110%" height="110%"><feGaussianBlur stdDeviation="5"/></filter>
<filter id="b5l" x="-20%" y="-20%" width="140%" height="140%"><feGaussianBlur stdDeviation="60"/></filter>
</defs>
<rect width="2380" height="1343" fill="#5c5d5f"/>
<g filter="url(#b5l)"><rect x="0" y="0" width="1400" height="500" fill="#6b6c6e"/><rect x="0" y="850" width="900" height="500" fill="#4c4c4f"/><rect x="1300" y="800" width="1080" height="543" fill="#4a4a4d"/><rect x="1300" y="0" width="1080" height="400" fill="#58595b"/></g>
<g filter="url(#b5)">
<g fill="#e0e0dd">
<path d="M0 90L270 0H580L0 215Z"/>
<path d="M0 350L890 0H1190L0 510Z"/>
<path d="M0 690L1500 0H1800L45 870L0 790Z"/>
<path d="M155 1070L1975 80L2130 165L275 1270Z"/>
<path d="M690 1343L2340 265L2380 290V480L1180 1343Z"/>
<path d="M1760 1343L2380 800V1180L2230 1343Z"/>
</g>
<path d="M2270 190L2380 260" stroke="#c8c8c6" stroke-width="8" fill="none"/>
<!-- shadows -->
<path d="M1060 880L1100 860L1110 950L1070 940Z" fill="#111"/>
<!-- woman -->
<path d="M1140 780L1215 750L1200 835L1150 850Z" fill="#a5714d"/>
<path d="M1035 800L1180 770L1192 1000L1222 1150L1160 1165L1110 1000Z" fill="#c08a64"/>
<path d="M1160 1160L1225 1145L1252 1290L1200 1312Z" fill="#0d0d0d"/>
<path d="M1030 180L1090 115L1150 130L1192 200L1222 320L1252 450L1232 565L1190 545L1200 400L1160 300L1060 300L1000 335Z" fill="#c29a66"/>
<path d="M1040 190L1092 115L1150 130L1180 190L1110 160Z" fill="#5c4530"/>
<path d="M950 342L1060 310L1160 322L1202 472H1000Z" fill="#c99670"/>
<path d="M1052 190L1170 188L1172 300L1110 318L1056 290Z" fill="#c6936c"/>
<path d="M1048 208L1182 198L1170 235L1120 240L1100 228L1070 245L1050 232Z" fill="#0b0b0b"/>
<path d="M830 622L882 420L952 350L1002 472L1002 642L942 692L882 672Z" fill="#b18b5c"/>
<path d="M1200 330L1282 332L1332 500L1402 650L1412 702L1352 732L1292 622L1232 582L1202 472Z" fill="#b8925f"/>
<path d="M995 470H1200L1232 580L1247 742L1030 802L985 682Z" fill="#0c0c0d"/>
<path d="M1060 320L1110 390L1160 325" fill="none" stroke="#d8d8dc" stroke-width="10"/>
<path d="M1120 395V465M1100 420H1140" stroke="#dcdce0" stroke-width="14" fill="none"/>
<!-- man -->
<path d="M1400 702L1560 480L1700 440L1850 420L2002 520L2042 700L2032 850L1992 982L1920 962L1932 822L1852 922L1822 902L1832 560L1700 520L1652 832L1562 802L1552 682L1442 762Z" fill="#0f0f10"/>
<path d="M1700 520L1842 480L1832 700L1842 932L1620 962L1652 832Z" fill="#ededef"/>
<path d="M1620 940L1832 930L1792 1000L1742 1100L1762 1350H1650L1642 1150L1592 1000Z" fill="#0c0c0d"/>
<path d="M1584 982L1604 975L1622 1120L1600 1118Z" fill="#e8e8e8"/>
<path d="M1680 400L1802 390L1812 482L1732 502L1690 472Z" fill="#b88a6a"/>
<path d="M1720 482L1832 462L1836 540L1760 545Z" fill="#4d4845"/>
<path d="M1700 292L1792 275L1852 320L1860 402L1762 382L1692 342Z" fill="#0e0e0f"/>
<path d="M1700 292L1790 278L1812 340L1762 378L1700 345Z" fill="#9ea2a7"/>
<path d="M1636 346L1700 336L1765 380L1650 362Z" fill="#0b0b0c"/>
<path d="M1712 540L1752 640L1832 520" fill="none" stroke="#b8b8bc" stroke-width="8"/>
<path d="M1752 642l9 22 24 1-19 15 7 23-21-14-21 14 7-23-19-15 24-1Z" fill="#111"/>
<path d="M1902 962L1972 972L1952 1052L1902 1032Z" fill="#b98c6e"/>
<path d="M1372 702L1440 722L1440 780L1390 772Z" fill="#c08c68"/>
</g>
</svg>
<svg class="wm" style="left:22px;top:22px;width:80px;height:14px;opacity:0.35" viewBox="0 0 184 32"><use href="#lg"/></svg>
</div>
<div class="img" style="left:614px;top:1256px;width:592px;height:120px;background:linear-gradient(180deg,#dcdcdc,#d2d2d2)"></div>
<!--IMG5E-->
<!--IMG6-->
<!--IMG7S--><div class="img" style="left:1214px;top:914px;width:594px;height:420px;background:#dfe4e8">
<svg width="594" height="366" viewBox="0 0 2180 1343" preserveAspectRatio="none" style="left:0;top:0">
<defs>
<filter id="b7" x="-10%" y="-10%" width="120%" height="120%"><feGaussianBlur stdDeviation="10"/></filter>
<filter id="b7s" x="-10%" y="-10%" width="120%" height="120%"><feGaussianBlur stdDeviation="4"/></filter>
<filter id="b7l" x="-50%" y="-50%" width="200%" height="200%"><feGaussianBlur stdDeviation="45"/></filter>
<linearGradient id="g7sk" x1="0" y1="0" x2="1" y2="0"><stop offset="0" stop-color="#e0b498"/><stop offset=".25" stop-color="#d3a07e"/><stop offset=".6" stop-color="#c8916c"/><stop offset="1" stop-color="#ab7655"/></linearGradient>
<linearGradient id="g7bg" x1="0" y1="0" x2="0" y2="1"><stop offset="0" stop-color="#dce2e7"/><stop offset="1" stop-color="#e4e8ea"/></linearGradient>
<linearGradient id="g7top" x1="0" y1="0" x2="0" y2="1"><stop offset="0" stop-color="#a06a48" stop-opacity=".6"/><stop offset=".4" stop-color="#a06a48" stop-opacity="0"/></linearGradient>
</defs>
<rect width="2180" height="1343" fill="url(#g7bg)"/>
<g filter="url(#b7)">
<path d="M330 -20H1400L1620 200L1760 500L1860 800L1905 1000L1960 1360H235L262 1100L214 800L208 500L240 250L290 80Z" fill="url(#g7sk)"/>
<path d="M330 -20H1400L1620 200L1760 500L1860 800L1905 1000L1960 1360H235L262 1100L214 800L208 500L240 250L290 80Z" fill="url(#g7top)"/>
<path d="M236 270L288 80L345 -20H470L350 70L282 240L262 330Z" fill="#1b1511"/>
<path d="M1800 650L2030 690L2030 1360H1880Z" fill="#9a694b"/>
<!-- ear -->
<path d="M2005 705L2100 640L2190 660V1245L2050 1360H1900L1942 1100L2002 900Z" fill="#d6a686"/>
<path d="M2040 900L2110 760L2160 900L2120 1100L2030 1130Z" fill="#ecc9b2"/>
<path d="M1950 1100L2010 920L2040 1100L1990 1250Z" fill="#f0d6c4"/>
<path d="M2050 1180L2180 1100V1245L2080 1330L2000 1290Z" fill="#c08e6e"/>
<!-- hair -->
<path d="M1300 -20H2010L2125 300L2152 622L2022 702L1952 902L1885 985L1822 700L1702 400L1500 150Z" fill="#17110f"/>
<path d="M1400 60L1560 90L1720 300L1800 560L1700 420L1560 230Z" fill="#3d2c24"/>
<path d="M1800 600L1880 760L1900 940L1850 820Z" fill="#4a362c"/>
</g>
<g filter="url(#b7l)">
<ellipse cx="990" cy="400" rx="170" ry="95" fill="#f2dccc" opacity=".8"/>
<ellipse cx="700" cy="250" rx="350" ry="160" fill="#d9a783" opacity=".7"/>
<ellipse cx="1180" cy="1170" rx="260" ry="170" fill="#ecd0bc" opacity=".75"/>
<ellipse cx="740" cy="810" rx="55" ry="120" fill="#f6e4d6" opacity=".9"/>
<ellipse cx="1560" cy="850" rx="220" ry="380" fill="#a8714f" opacity=".7"/>
<ellipse cx="1250" cy="700" rx="260" ry="60" fill="#b9835c" opacity=".6"/>
<ellipse cx="400" cy="1060" rx="170" ry="50" fill="#9c6c50" opacity=".65"/>
<ellipse cx="1180" cy="900" rx="200" ry="34" fill="#a87660" opacity=".55"/>
<ellipse cx="380" cy="820" rx="200" ry="50" fill="#b5805c" opacity=".6"/>
<ellipse cx="590" cy="1120" rx="60" ry="160" fill="#b27e5e" opacity=".55"/>
<ellipse cx="330" cy="500" rx="90" ry="260" fill="#e7c2a8" opacity=".8"/>
</g>
<g filter="url(#b7)">
<ellipse cx="892" cy="830" rx="28" ry="28" fill="#f7e9df"/>
<ellipse cx="690" cy="1232" rx="62" ry="34" fill="#f7e5d6"/>
<ellipse cx="740" cy="790" rx="26" ry="60" fill="#f8eadf"/>
<!-- nose -->
<path d="M560 1220Q600 1120 700 1130Q900 1150 980 1280L985 1360H550Z" fill="#d7a480"/>
<ellipse cx="815" cy="1318" rx="62" ry="26" fill="#3a2018"/>
<ellipse cx="610" cy="1345" rx="30" ry="14" fill="#4a2a20"/>
</g>
<g filter="url(#b7s)">
<!-- brows -->
<path d="M758 605L900 482L1100 408L1300 405L1450 478L1525 572L1400 522L1200 486L1000 528L850 615L795 655Z" fill="#4a352b"/>
<path d="M900 500L1100 425L1300 425L1440 490L1300 455L1100 465Z" fill="#32231c"/>
<path d="M176 705L222 610L330 572L452 608L545 690L522 722L400 682L282 682L190 755Z" fill="#2c201a"/>
<!-- right eye -->
<path d="M985 852Q1150 722 1385 780Q1300 850 1170 862Q1060 868 985 852Z" fill="#e9e2de"/>
<circle cx="1176" cy="797" r="74" fill="#5b2d19"/>
<circle cx="1176" cy="797" r="34" fill="#180d09"/>
<path d="M985 852Q1150 706 1392 774" fill="none" stroke="#1e1512" stroke-width="20"/>
<path d="M1060 770L1030 730M1120 735L1100 700M1190 722L1185 690M1260 735L1275 705M1330 760L1365 735" stroke="#1e1512" stroke-width="9"/>
<path d="M1000 765Q1200 640 1400 722" fill="none" stroke="#a56e4c" stroke-width="9"/>
<path d="M1000 862Q1180 890 1340 820" fill="none" stroke="#8a5a48" stroke-width="8"/>
<path d="M1168 752h40v18h-40z" fill="#fff"/>
<!-- left eye -->
<path d="M300 992Q400 862 582 930Q500 1000 400 1010Q340 1012 300 992Z" fill="#e6dfdc"/>
<circle cx="420" cy="942" r="70" fill="#4b2514"/>
<circle cx="420" cy="942" r="32" fill="#160c08"/>
<path d="M196 965Q340 850 585 925" fill="none" stroke="#1a1210" stroke-width="24"/>
<path d="M210 970L190 1000M240 940L205 930M290 905L270 870" stroke="#1a1210" stroke-width="10"/>
<path d="M250 880Q400 800 560 870" fill="none" stroke="#a06a4a" stroke-width="8"/>
<path d="M300 1000Q420 1040 570 960" fill="none" stroke="#7d5140" stroke-width="8"/>
<circle cx="452" cy="908" r="13" fill="#fff"/>
</g>
</svg>
<svg class="wm" style="opacity:0.5" viewBox="0 0 184 32"><use href="#lg"/></svg>
</div>
<!--IMG7E-->
</div>

</body>
</html>
